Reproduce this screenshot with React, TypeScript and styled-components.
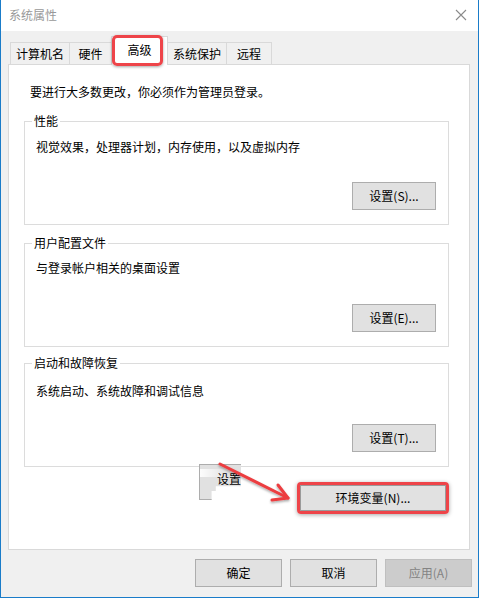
import React from "react";
import styled, { createGlobalStyle } from "styled-components";

const GlobalStyle = createGlobalStyle`
    html, body {
        margin: 0;
        padding: 0;
        background: #ffffff;
    }
    * {
        box-sizing: border-box;
    }
    body {
        font-family: "Noto Sans CJK SC", "Liberation Sans", sans-serif;
        font-size: 12px;
        color: #000;
    }
`;

type TabItem = { label: string; width: number; active?: boolean };

const tabs: TabItem[] = [
    { label: "计算机名", width: 60 },
    { label: "硬件", width: 43 },
    { label: "高级", width: 57, active: true },
    { label: "系统保护", width: 60 },
    { label: "远程", width: 46 },
];

const groups = [
    { title: "性能", desc: "视觉效果，处理器计划，内存使用，以及虚拟内存", button: "设置(S)...", top: 21, pad: 17 },
    { title: "用户配置文件", desc: "与登录帐户相关的桌面设置", button: "设置(E)...", top: 18, pad: 16 },
    { title: "启动和故障恢复", desc: "系统启动、系统故障和调试信息", button: "设置(T)...", top: 16, pad: 19 },
];

export default function App() {
    return (
        <>
            <GlobalStyle />
            <Window>
                <TitleBar>
                    <Title>系统属性</Title>
                    <CloseIcon width="12" height="12" viewBox="0 0 12 12">
                        <path d="M1 1 L11 11 M11 1 L1 11" stroke="#8a8a8a" strokeWidth="1.1" />
                    </CloseIcon>
                </TitleBar>

                <Body>
                    <TabRow>
                        {tabs.map((tab) => (
                            <Tab key={tab.label} $width={tab.width} $active={tab.active}>
                                {tab.label}
                                {tab.active && <TabHighlight />}
                            </Tab>
                        ))}
                    </TabRow>

                    <Panel>
                        <Intro>要进行大多数更改，你必须作为管理员登录。</Intro>

                        {groups.map((g) => (
                            <Group key={g.title} $top={g.top} $pad={g.pad}>
                                <Legend>{g.title}</Legend>
                                <Description>{g.desc}</Description>
                                <GroupButton>{g.button}</GroupButton>
                            </Group>
                        ))}

                        <EnvRow>
                            <EnvFrame>
                                <EnvButton>环境变量(N)...</EnvButton>
                            </EnvFrame>
                        </EnvRow>

                        <GhostButton>
                            <GhostFade />
                            <GhostLabel>设置</GhostLabel>
                        </GhostButton>

                        <Arrow width="90" height="50" viewBox="0 0 90 50">
                            <defs>
                                <filter id="arrowShadow" x="-20%" y="-20%" width="140%" height="160%">
                                    <feDropShadow dx="0" dy="1.5" stdDeviation="1.2" floodColor="#000" floodOpacity="0.35" />
                                </filter>
                            </defs>
                            <g filter="url(#arrowShadow)" stroke="#ec3d3f" strokeWidth="3" strokeLinecap="round" fill="none">
                                <path d="M6 4 L74 38" />
                                <path d="M74 38 L58 40 M74 38 L64 25" />
                            </g>
                        </Arrow>
                    </Panel>

                    <Footer>
                        <DialogButton>确定</DialogButton>
                        <DialogButton>取消</DialogButton>
                        <DialogButton disabled>应用(A)</DialogButton>
                    </Footer>
                </Body>
            </Window>
        </>
    );
}

const Window = styled.div`
    width: 479px;
    height: 598px;
    display: flex;
    flex-direction: column;
    background: #f0f0f0;
    border: 1px solid #1a7cc9;
    border-top: none;
    overflow: hidden;
`;

const TitleBar = styled.header`
    height: 31px;
    flex: 0 0 31px;
    background: #ffffff;
    display: flex;
    align-items: center;
    justify-content: space-between;
    padding: 0 11px 2px 8px;
`;

const Title = styled.span`
    color: #999999;
    font-size: 12px;
    line-height: 16px;
`;

const CloseIcon = styled.svg`
    display: block;
`;

const Body = styled.div`
    flex: 1;
    display: flex;
    flex-direction: column;
    padding: 11px 8px 0 7px;
`;

const TabRow = styled.div`
    display: flex;
    align-items: flex-end;
    height: 22px;
    padding-left: 2px;
    position: relative;
    z-index: 2;
`;

const Tab = styled.div<{ $width: number; $active?: boolean }>`
    position: relative;
    width: ${({ $width }) => $width}px;
    height: ${({ $active }) => ($active ? "29px" : "22px")};
    margin-left: -1px;
    margin-bottom: ${({ $active }) => ($active ? "-1px" : "0")};
    &:first-child {
        margin-left: 0;
    }
    display: flex;
    align-items: center;
    justify-content: center;
    border: 1px solid #d9d9d9;
    border-bottom: none;
    background: ${({ $active }) => ($active ? "#ffffff" : "#f0f0f0")};
    z-index: ${({ $active }) => ($active ? 1 : 0)};
    padding-bottom: ${({ $active }) => ($active ? "3px" : "0")};
    line-height: 16px;
    white-space: nowrap;
`;

const TabHighlight = styled.span`
    position: absolute;
    left: 0;
    top: -2px;
    width: 51px;
    height: 31px;
    border: 3px solid #ee4449;
    border-radius: 5px;
    box-shadow: 0 1px 3px rgba(0, 0, 0, 0.35);
    pointer-events: none;
`;

const Panel = styled.section`
    position: relative;
    height: 486px;
    flex: 0 0 486px;
    background: #ffffff;
    border: 1px solid #d9d9d9;
    padding: 19px 20px 0 21px;
    display: flex;
    flex-direction: column;
`;

const Intro = styled.div`
    line-height: 16px;
    white-space: nowrap;
`;

const Group = styled.div<{ $top: number; $pad: number }>`
    position: relative;
    height: 104px;
    margin: ${({ $top }) => $top}px 0 0 -6px;
    border: 1px solid #dcdcdc;
    padding: ${({ $pad }) => $pad}px 12px 14px 11px;
    display: flex;
    flex-direction: column;
`;

const Legend = styled.span`
    position: absolute;
    top: -9px;
    left: 7px;
    padding: 0 2px;
    background: #ffffff;
    line-height: 16px;
`;

const Description = styled.div`
    line-height: 16px;
    white-space: nowrap;
`;

const ButtonBase = styled.button`
    font-family: "Noto Sans CJK SC", "Liberation Sans", sans-serif;
    font-size: 12px;
    line-height: 16px;
    color: #000;
    background: #e1e1e1;
    border: 1px solid #adadad;
    border-radius: 0;
    padding: 0;
    display: flex;
    align-items: center;
    justify-content: center;
`;

const GroupButton = styled(ButtonBase)`
    width: 84px;
    height: 28px;
    margin-top: auto;
    align-self: flex-end;
`;

const EnvRow = styled.div`
    display: flex;
    justify-content: flex-end;
    margin-top: 15px;
    padding-right: 0;
`;

const EnvFrame = styled.div`
    border: 3px solid #ee4449;
    border-radius: 4px;
    box-shadow: 0 1px 4px rgba(0, 0, 0, 0.35);
`;

const EnvButton = styled(ButtonBase)`
    width: 146px;
    height: 26px;
    border-color: #9a9a9a;
`;

const GhostButton = styled.div`
    position: absolute;
    left: 190px;
    top: 399px;
    width: 42px;
    height: 36px;
    background: #e1e1e1;
    border: 1px solid #adadad;
    border-right: none;
    clip-path: polygon(0 0, 100% 0, 100% 62%, 40% 62%, 40% 75%, 30% 75%, 30% 100%, 0 100%);
`;

const GhostFade = styled.span`
    position: absolute;
    left: 0;
    top: 4px;
    width: 30px;
    height: 8px;
    background: linear-gradient(90deg, rgba(255, 255, 255, 0.9), rgba(255, 255, 255, 0));
`;

const GhostLabel = styled.span`
    position: absolute;
    left: 17px;
    top: 6px;
    line-height: 16px;
    white-space: nowrap;
`;

const Arrow = styled.svg`
    position: absolute;
    left: 205px;
    top: 395px;
    overflow: visible;
`;

const Footer = styled.div`
    display: flex;
    justify-content: flex-end;
    gap: 8px;
    padding: 9px 0 0 0;
    margin-right: -2px;
`;

const DialogButton = styled(ButtonBase)`
    width: 87px;
    height: 28px;
    &:disabled {
        background: #cccccc;
        border-color: #bfbfbf;
        color: #838383;
    }
`;
